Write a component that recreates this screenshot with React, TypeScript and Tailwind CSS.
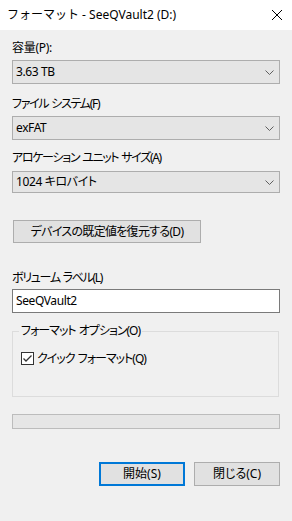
const font = "font-['Noto_Sans','Noto_Sans_CJK_JP',sans-serif] [font-feature-settings:'palt']";

const Chevron = () => (
	<svg width="9" height="5" viewBox="0 0 9 5" className="shrink-0">
		<path d="M0.5 0.5 L4.5 4.5 L8.5 0.5" fill="none" stroke="#5f5f5f" strokeWidth="1" />
	</svg>
);

const Combo = ({ value, h }: { value: string; h: string }) => (
	<div className={`${h} flex items-center justify-between border border-[#adadad] bg-[#e5e5e5] pl-[3px] pr-[5px]`}>
		<span className="leading-4 tracking-[-0.4px]">{value}</span>
		<Chevron />
	</div>
);

const Label = ({ text, mt }: { text: string; mt: string }) => (
	<div className={`${mt} h-4 leading-4 tracking-[-1.3px] [word-spacing:1px]`}>{text}</div>
);

const App = () => {
	return (
		<div className={`w-[292px] h-[521px] bg-[#f0f0f0] text-[12px] text-[#000] ${font}`}>
			<div className="h-[30px] bg-white flex items-center justify-between pl-[7px] pr-[10px]">
				<span className="leading-4 [font-feature-settings:normal]">フォーマット - SeeQVault2 (D:)</span>
				<svg width="10" height="10" viewBox="0 0 10 10">
					<path d="M0 0 L10 10 M10 0 L0 10" stroke="#000" strokeWidth="1" />
				</svg>
			</div>

			<div className="px-3 flex flex-col">
				<div className="mt-[10px] h-4 leading-4 tracking-[-0.3px]">容量(P):</div>
				<div className="mt-1">
					<Combo value="3.63 TB" h="h-6" />
				</div>

				<Label text="ファイル システム(F)" mt="mt-3" />
				<div className="mt-1">
					<Combo value="exFAT" h="h-6" />
				</div>

				<Label text="アロケーション ユニット サイズ(A)" mt="mt-[10px]" />
				<div className="mt-[5px]">
					<Combo value="1024 キロバイト" h="h-[22px]" />
				</div>

				<button className="mt-[27px] ml-px w-[188px] h-[23px] border border-[#adadad] bg-[#e1e1e1] leading-4 tracking-[-0.7px]">
					デバイスの既定値を復元する(D)
				</button>

				<Label text="ボリューム ラベル(L)" mt="mt-[27px]" />
				<div className="mt-[3px] h-6 border border-[#7a7a7a] bg-white flex items-center pl-[3px]">
					<span className="leading-4 tracking-[-0.4px]">SeeQVault2</span>
				</div>

				<fieldset className="mt-[10px] w-[267px] border border-[#dcdcdc] p-0 m-0">
					<legend className="ml-[6px] px-[2px] leading-4 tracking-[-1px] [word-spacing:1px]">フォーマット オプション(O)</legend>
					<div className="pl-2 pt-[13px] pb-[31px] flex items-center gap-[3px]">
						<span className="w-[13px] h-[13px] border border-[#333] bg-white flex items-center justify-center">
							<svg width="11" height="11" viewBox="0 0 11 11">
								<path d="M1.5 5.5 L4 8 L9.5 2.5" fill="none" stroke="#333" strokeWidth="1.3" />
							</svg>
						</span>
						<span className="leading-[13px] tracking-[-1px] [word-spacing:1px]">クイック フォーマット(Q)</span>
					</div>
				</fieldset>

				<div className="mt-[17px] h-[15px] border border-[#bcbcbc] bg-[#e6e6e6]" />

				<div className="mt-[33px] flex justify-end gap-[9px]">
					<button className="w-[86px] h-6 border-2 border-[#0078d7] bg-[#e1e1e1] leading-4">開始(S)</button>
					<button className="w-[86px] h-6 border border-[#adadad] bg-[#e1e1e1] leading-4">閉じる(C)</button>
				</div>
			</div>
		</div>
	);
};

export default App;
